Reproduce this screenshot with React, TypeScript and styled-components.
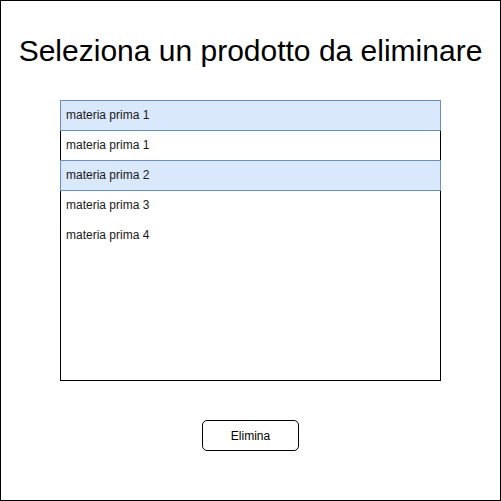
import React from "react";
import styled, { createGlobalStyle } from "styled-components";

const Global = createGlobalStyle`
  html, body { margin: 0; padding: 0; background: #fff; }
  body { font-family: "Liberation Sans", Arial, sans-serif; color: #000; }
`;

const Frame = styled.div`
  box-sizing: border-box;
  width: 501px;
  height: 501px;
  border: 1px solid #000;
  display: flex;
  flex-direction: column;
  align-items: center;
`;

const Title = styled.h1`
  margin: 0;
  margin-top: 33px;
  height: 66px;
  font-size: 30px;
  font-weight: 400;
  line-height: 34px;
  text-align: center;
`;

const List = styled.div`
  box-sizing: border-box;
  width: 381px;
  height: 281px;
  border: 1px solid #000;
  display: flex;
  flex-direction: column;
`;

const Row = styled.div<{ $selected?: boolean }>`
  box-sizing: border-box;
  height: 31px;
  margin: 0 -1px -1px -1px;
  &:first-child { margin-top: -1px; }
  padding-left: 5px;
  border: 1px solid ${(p) => (p.$selected ? "#6c8ebf" : "transparent")};
  background: ${(p) => (p.$selected ? "#dae8fc" : "transparent")};
  font-size: 12px;
  line-height: 28px;
  color: #1a1a1a;
`;

const Button = styled.button`
  box-sizing: border-box;
  margin-top: 39px;
  width: 97px;
  height: 31px;
  border: 1px solid #000;
  border-radius: 5px;
  background: #fff;
  font-family: "Liberation Sans", Arial, sans-serif;
  font-size: 12px;
  color: #000;
  padding: 0;
`;

const items = [
  { label: "materia prima 1", selected: true },
  { label: "materia prima 1", selected: false },
  { label: "materia prima 2", selected: true },
  { label: "materia prima 3", selected: false },
  { label: "materia prima 4", selected: false },
];

export default function App() {
  return (
    <>
      <Global />
      <Frame>
        <Title>Seleziona un prodotto da eliminare</Title>
        <List>
          {items.map((it, i) => (
            <Row key={i} $selected={it.selected}>
              {it.label}
            </Row>
          ))}
        </List>
        <Button>Elimina</Button>
      </Frame>
    </>
  );
}
